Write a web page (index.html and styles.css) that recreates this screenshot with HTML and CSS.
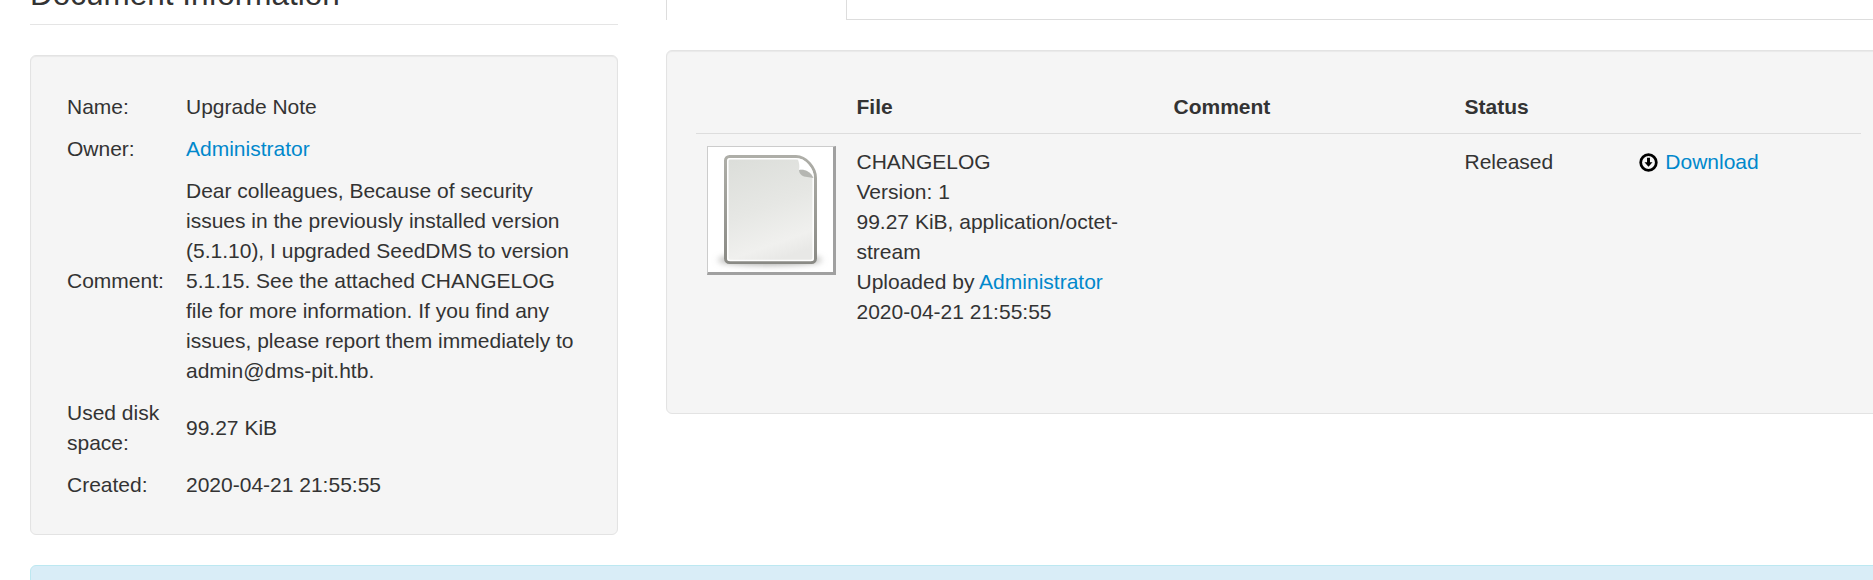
FILE: index.html
```html
<!DOCTYPE html>
<html lang="en">
<head>
    <meta charset="UTF-8">
    <meta name="viewport" content="width=device-width, initial-scale=1.0">
    <title>Document Information</title>
    <link rel="stylesheet" href="styles.css">
</head>
<body>

<div class="page">
    <div class="columns">
        <div class="col-info">
            <legend class="section-title">Document Information</legend>
            <div class="well">
                <table class="info-table">
                    <tr>
                        <td class="info-label">Name:</td>
                        <td>Upgrade Note</td>
                    </tr>
                    <tr>
                        <td class="info-label">Owner:</td>
                        <td><a href="#">Administrator</a></td>
                    </tr>
                    <tr>
                        <td class="info-label">Comment:</td>
                        <td>Dear colleagues, Because of security issues in the previously installed version (5.1.10), I upgraded SeedDMS to version 5.1.15. See the attached CHANGELOG file for more information. If you find any issues, please report them immediately to admin@dms-pit.htb.</td>
                    </tr>
                    <tr>
                        <td class="info-label">Used disk space:</td>
                        <td>99.27 KiB</td>
                    </tr>
                    <tr>
                        <td class="info-label">Created:</td>
                        <td>2020-04-21 21:55:55</td>
                    </tr>
                </table>
            </div>
        </div>

        <div class="col-version">
            <ul class="nav-tabs">
                <li class="tab-active"></li>
            </ul>
            <div class="well">
                <table class="version-table">
                    <colgroup>
                        <col class="col-preview">
                        <col class="col-file">
                        <col class="col-comment">
                        <col class="col-status">
                        <col class="col-actions">
                    </colgroup>
                    <thead>
                        <tr>
                            <th></th>
                            <th>File</th>
                            <th>Comment</th>
                            <th>Status</th>
                            <th></th>
                        </tr>
                    </thead>
                    <tbody>
                        <tr>
                            <td class="preview-cell">
                                <!-- generic file preview -->
                                <svg class="preview" viewBox="0 0 125 125" aria-label="File preview">
                                    <defs>
                                        <linearGradient id="page-fill" x1="0.2" y1="0" x2="0.5" y2="1">
                                            <stop offset="0" stop-color="#dcdeda"/>
                                            <stop offset="0.5" stop-color="#e6e7e4"/>
                                            <stop offset="0.85" stop-color="#f0f0ee"/>
                                            <stop offset="1" stop-color="#e8e8e6"/>
                                        </linearGradient>
                                        <linearGradient id="page-edge" x1="0" y1="0" x2="0" y2="1">
                                            <stop offset="0" stop-color="#aeaea8"/>
                                            <stop offset="1" stop-color="#8a8a85"/>
                                        </linearGradient>
                                        <filter id="soft" x="-20%" y="-200%" width="140%" height="500%">
                                            <feGaussianBlur stdDeviation="3"/>
                                        </filter>
                                    </defs>
                                    <ellipse cx="62" cy="113" rx="52" ry="5" fill="#a8a8a6" filter="url(#soft)"/>
                                    <path d="M21.500 9.500H88C98 9.500 107.500 21 107.500 31V111.500a4 4 0 0 1-4 4H21.500a4 4 0 0 1-4-4V13.500a4 4 0 0 1 4-4Z" fill="url(#page-fill)" stroke="url(#page-edge)" stroke-width="3"/>
                                    <path d="M22 11.800H88C97 11.800 105.200 22 105.200 31V111a2.500 2.500 0 0 1-2.500 2.500H22.300a2.500 2.500 0 0 1-2.500-2.500V14a2.200 2.200 0 0 1 2.200-2.200Z" fill="none" stroke="#fff" stroke-width="1.500"/>
                                    <path d="M89.500 11.500C98 13 105 22 105.500 30C102 24 96 22 91 23C92 19 91 15 89.500 11.500Z" fill="#fff"/>
                                    <path d="M91 23C96 22 102 24 105.500 31L96 29.500C93 28.500 91 26 91 23Z" fill="#b5b6b2"/>
                                </svg>
                            </td>
                            <td>
                                <ul class="file-meta">
                                    <li>CHANGELOG</li>
                                    <li>Version: 1</li>
                                    <li>99.27 KiB, application/octet-stream</li>
                                    <li>Uploaded by <a href="#">Administrator</a></li>
                                    <li>2020-04-21 21:55:55</li>
                                </ul>
                            </td>
                            <td></td>
                            <td>Released</td>
                            <td>
                                <a href="#" class="download">
                                    <svg class="icon-download" viewBox="0 0 18 18" aria-hidden="true">
                                        <circle cx="9" cy="9" r="7.400" fill="none" stroke="#000" stroke-width="2.600"/>
                                        <path d="M7.600 4.500h2.800v4.200h2.400L9 13 5.200 8.700h2.400Z" fill="#000"/>
                                    </svg>
                                    Download
                                </a>
                            </td>
                        </tr>
                    </tbody>
                </table>
            </div>
        </div>
    </div>

    <div class="alert-info"></div>
</div>

</body>
</html>
```

FILE: styles.css
```css
* {
    box-sizing: border-box;
}

html, body {
    height: 100%;
    margin: 0;
    overflow: hidden;
    background: #fff;
}

body {
    font-family: "Liberation Sans", Arial, sans-serif;
    font-size: 21px;
    line-height: 30px;
    color: #333;
}

a {
    color: #0088cc;
    text-decoration: none;
}

/* the screenshot starts part way down the page */
.page {
    width: 1890px;
    margin-top: -36px;
    padding-left: 30px;
}

.columns {
    display: grid;
    grid-template-columns: 588px 1224px;
    column-gap: 48px;
    align-items: start;
}

.section-title {
    display: block;
    width: 100%;
    padding: 0;
    margin-bottom: 30px;
    font-size: 31.5px;
    line-height: 60px;
    border-bottom: 1px solid #e5e5e5;
}

.well {
    padding: 30px 28.5px;
    background: #f5f5f5;
    border: 1px solid #e3e3e3;
    border-radius: 6px;
    box-shadow: inset 0 1px 1px rgba(0, 0, 0, 0.05);
}

.col-info .well {
    padding-bottom: 28px;
}

table {
    width: 100%;
    border-collapse: collapse;
    border-spacing: 0;
}

.info-table td {
    padding: 6px 7.5px;
}

.info-label {
    width: 119px;
}

.nav-tabs {
    display: flex;
    height: 56px;
    padding: 0;
    margin: 0 0 30px;
    list-style: none;
    border-bottom: 1px solid #ddd;
}

.tab-active {
    width: 181px;
    height: 56px;
    background: #fff;
    border: 1px solid #ddd;
    border-bottom: 0;
}

.version-table {
    table-layout: fixed;
    margin-bottom: 30px;
}

.col-preview { width: 149px; }
.col-file { width: 317px; }
.col-comment { width: 291px; }
.col-status { width: 174px; }

.version-table th,
.version-table td {
    padding: 13px 12px 12px;
    text-align: left;
    vertical-align: top;
}

.version-table th {
    padding: 11px 12px;
    vertical-align: bottom;
    font-weight: bold;
}

.version-table td {
    border-top: 1px solid #ddd;
}

.version-table .preview-cell {
    padding: 12px 12px 12px 11.5px;
}

.preview {
    display: block;
    width: 129px;
    height: 129px;
    background: #fff;
    border-style: solid;
    border-color: #ccc #a0a0a0 #a0a0a0 #ccc;
    border-width: 1px 3px 3px 1px;
}

.file-meta {
    padding: 0;
    margin: 0 0 14px;
    list-style: none;
}

.icon-download {
    width: 19px;
    height: 19px;
    margin-right: 2px;
    vertical-align: -3px;
}

.alert-info {
    height: 60px;
    margin-top: 30px;
    background: #d9edf7;
    border: 1px solid #bce8f1;
    border-radius: 6px;
}
```
